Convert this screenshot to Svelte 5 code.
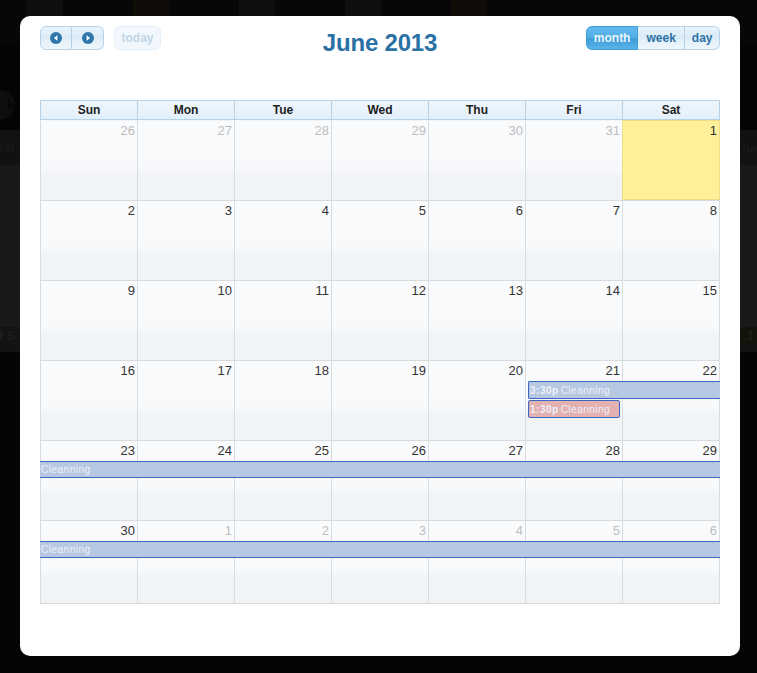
<script>
	const days = ['Sun', 'Mon', 'Tue', 'Wed', 'Thu', 'Fri', 'Sat'];

	const weeks = [
		{ cells: [[26, 1], [27, 1], [28, 1], [29, 1], [30, 1], [31, 1], [1, 0, 1]], events: [] },
		{ cells: [[2], [3], [4], [5], [6], [7], [8]], events: [] },
		{ cells: [[9], [10], [11], [12], [13], [14], [15]], events: [] },
		{
			cells: [[16], [17], [18], [19], [20], [21], [22]],
			events: [
				{ kind: 'blue open', time: '3:30p', col: '6 / 8', row: 1 },
				{ kind: 'red', time: '1:30p', col: '6 / 7', row: 2 }
			]
		},
		{
			cells: [[23], [24], [25], [26], [27], [28], [29]],
			events: [{ kind: 'blue full', time: '', col: '1 / 8', row: 1 }]
		},
		{
			cells: [[30], [1, 1], [2, 1], [3, 1], [4, 1], [5, 1], [6, 1]],
			events: [{ kind: 'blue full', time: '', col: '1 / 8', row: 1 }],
			last: true
		}
	];
</script>

<div class="backdrop">
	<!-- bits of the page behind the modal -->
	<span class="ghost-circle">k</span>
	<span class="ghost left-top">tat</span>
	<span class="ghost left-bottom">f S e</span>
	<span class="ghost right-top">he</span>
	<span class="ghost-olive">1</span>
	<div class="thumbs">
		<i class="grey"></i>
		<i class="brown"></i>
		<i class="grey"></i>
		<i class="grey"></i>
		<i class="brown"></i>
	</div>

	<div class="modal">
		<header class="toolbar">
			<div class="left">
				<div class="btn-group">
					<button class="btn nav" aria-label="Previous">
						<svg viewBox="0 0 12 12" width="12" height="12"><circle cx="6" cy="6" r="6" fill="#2f77aa" /><path d="M7.4 3.2v5.6L3.9 6z" fill="#fff" /></svg>
					</button>
					<button class="btn nav" aria-label="Next">
						<svg viewBox="0 0 12 12" width="12" height="12"><circle cx="6" cy="6" r="6" fill="#2f77aa" /><path d="M4.6 3.2v5.6L8.1 6z" fill="#fff" /></svg>
					</button>
				</div>
				<button class="btn today">today</button>
			</div>
			<h2>June 2013</h2>
			<div class="btn-group">
				<button class="btn active">month</button>
				<button class="btn">week</button>
				<button class="btn day">day</button>
			</div>
		</header>

		<div class="calendar">
			<div class="head">
				{#each days as day}
					<div class="head-cell">{day}</div>
				{/each}
			</div>
			{#each weeks as week, i}
				<div class="week" class:first={i === 0} class:last={week.last}>
					{#each week.cells as [num, other, today]}
						<div class="cell" class:today>
							<span class="num" class:other>{num}</span>
						</div>
					{/each}
					{#if week.events.length}
						<div class="events">
							{#each week.events as ev}
								<div class="event {ev.kind}" style="grid-column: {ev.col}; grid-row: {ev.row}">
									{#if ev.time}<b>{ev.time}</b>{/if}<span>Cleanning</span>
								</div>
							{/each}
						</div>
					{/if}
				</div>
			{/each}
		</div>
	</div>
</div>

<style>
	:global(body) {
		background: #050506;
	}

	.backdrop {
		position: relative;
		height: 673px;
		box-sizing: border-box;
		padding: 16px 17px 17px 20px;
		overflow: hidden;
		font-family: 'Liberation Sans', Arial, sans-serif;
		background: linear-gradient(
			to bottom,
			#070708 0,
			#070708 44px,
			#040405 44px,
			#040405 130px,
			#111111 130px,
			#111111 165px,
			#191919 165px,
			#191919 327px,
			#131313 327px,
			#131313 352px,
			#050506 352px
		);
	}

	.ghost-circle {
		position: absolute;
		left: -15px;
		top: 90px;
		width: 30px;
		height: 30px;
		border-radius: 50%;
		background: #0e0e0e;
		color: #050505;
		font-size: 14px;
		font-weight: bold;
		line-height: 30px;
		text-align: right;
	}

	.ghost {
		position: absolute;
		font-size: 13px;
		font-weight: bold;
		color: #181818;
		white-space: nowrap;
	}

	.left-top {
		left: -1px;
		top: 140px;
	}

	.left-bottom {
		left: -1px;
		top: 328px;
		color: #1e1e1e;
	}

	.right-top {
		left: 742px;
		top: 141px;
	}

	.ghost-olive {
		position: absolute;
		left: 740px;
		right: 0;
		top: 327px;
		height: 18px;
		padding-left: 7px;
		font-size: 13px;
		line-height: 18px;
		background: #11140a;
		color: #20241a;
	}

	.thumbs {
		position: absolute;
		left: 27px;
		top: 0;
		display: flex;
		gap: 70px;
	}

	.thumbs i {
		display: block;
		width: 36px;
		height: 16px;
	}

	.thumbs .grey {
		background: #0e0e0e;
	}

	.thumbs .brown {
		background: #100c07;
	}

	.modal {
		position: relative;
		width: 720px;
		height: 640px;
		box-sizing: border-box;
		padding: 10px 20px;
		background: #fff;
		border-radius: 10px;
	}

	.toolbar {
		display: grid;
		grid-template-columns: 1fr auto 1fr;
		align-items: start;
		height: 74px;
	}

	.toolbar > .btn-group {
		justify-self: end;
	}

	.left {
		display: flex;
		gap: 10px;
	}

	h2 {
		margin: 3px 0 0;
		font-size: 24px;
		line-height: 28px;
		font-weight: bold;
		letter-spacing: -0.2px;
		color: #2a71a5;
	}

	.btn-group {
		display: flex;
	}

	.btn {
		height: 24px;
		box-sizing: border-box;
		margin: 0;
		padding: 0 8.5px;
		font-family: inherit;
		font-size: 12px;
		font-weight: bold;
		color: #2f72a3;
		border: 1px solid #b5d2e8;
		border-left-width: 0;
		background: linear-gradient(to bottom, #eaf4fb 0, #d9eaf7 50%, #e3f0fa 60%, #eef6fc 100%);
	}

	.btn.day {
		padding: 0 6.5px;
	}

	.btn-group .btn:first-child {
		border-left-width: 1px;
		border-radius: 6px 0 0 6px;
	}

	.btn-group .btn:last-child {
		border-radius: 0 6px 6px 0;
	}

	.btn.nav {
		display: flex;
		align-items: center;
		justify-content: center;
		width: 32px;
		padding: 0;
	}

	.btn.today {
		width: 47px;
		padding: 0;
		border: 1px solid #e3eff8;
		border-radius: 6px;
		color: #c0d5e4;
		background: #f1f7fc;
	}

	.btn.active {
		padding: 0 6.5px;
		color: #e8f5fd;
		border-color: #3d9bd6;
		background: linear-gradient(to bottom, #62b8ec 0, #52aee6 50%, #3a9ad8 50%, #5cb3e8 100%);
	}

	.calendar {
		width: 680px;
	}

	.head {
		display: grid;
		grid-template-columns: repeat(7, 97px);
		height: 20px;
		box-sizing: border-box;
		border: 1px solid #b8d3e8;
		border-right-width: 0;
		background: linear-gradient(to bottom, #eff6fc, #e2eff9);
	}

	.head-cell {
		font-size: 12px;
		font-weight: bold;
		line-height: 19px;
		text-align: center;
		color: #222;
		border-right: 1px solid #b8d3e8;
	}

	.week {
		position: relative;
		display: grid;
		grid-template-columns: repeat(7, 97px);
		height: 80px;
		border-right: 1px solid #d9dcdf;
		box-sizing: border-box;
	}

	.week.last {
		height: 84px;
		border-bottom: 1px solid #d9dcdf;
	}

	.cell {
		box-sizing: border-box;
		padding: 0 2px 0 0;
		text-align: right;
		border-left: 1px solid #d9dcdf;
		border-top: 1px solid #d9dcdf;
		background: linear-gradient(to bottom, #fafbfd 0, #f8f9fb 55%, #f1f4f7 72%, #f1f4f7 100%);
	}

	.week.first .cell {
		border-top-color: transparent;
	}

	.cell.today {
		position: relative;
		background: #fff09a;
		border: 1px solid #eedc8a;
		margin-right: -1px;
	}

	.week.first .cell.today {
		border-top-color: #eedc8a;
	}

	.num {
		font-size: 13px;
		color: #333;
	}

	.num.other {
		color: #bdbdbd;
	}

	.events {
		position: absolute;
		left: 0;
		right: -1px;
		top: 21px;
		display: grid;
		grid-template-columns: repeat(6, 97px) 98px;
		grid-auto-rows: 18px;
		row-gap: 1px;
	}

	.event {
		box-sizing: border-box;
		height: 18px;
		font-size: 10px;
		line-height: 18px;
		letter-spacing: 0.5px;
		color: #eef2f8;
		white-space: nowrap;
		border: 1px solid #3a68c0;
		padding-left: 1px;
		background: #b7c8e2;
		overflow: hidden;
	}

	.event b {
		margin-right: 2px;
	}

	.event.blue.open {
		margin-left: 3px;
		border-right: 0;
		border-radius: 2px 0 0 2px;
	}

	.event.blue.full {
		border-left: 0;
		border-right: 0;
		height: 17px;
		line-height: 15px;
	}

	.event.red {
		margin: 0 2px 0 3px;
		background: #e3b1b1;
		border-radius: 2px;
	}
</style>
